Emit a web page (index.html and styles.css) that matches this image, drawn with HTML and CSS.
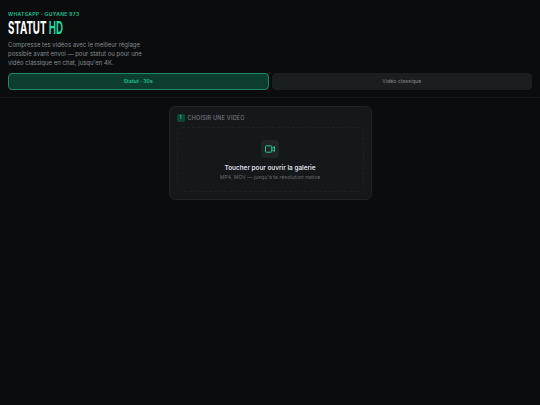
FILE: index.html
```html
<!DOCTYPE html>
<html lang="fr">
<head>
  <meta charset="UTF-8" />
  <meta name="viewport" content="width=device-width, initial-scale=1.0"/>
  <title>Statut HD</title>
  <link rel="stylesheet" href="styles.css">
</head>
<body>
  <header class="header">
    <div class="eyebrow">WHATSAPP · GUYANE 973</div>
    <h1 class="title">STATUT <span class="accent">HD</span></h1>
    <p class="intro">Compresse tes vidéos avec le meilleur réglage possible avant envoi — pour statut ou pour une vidéo classique en chat, jusqu'en 4K.</p>
    <div class="tabs">
      <button class="tab active">Statut · 30s</button>
      <button class="tab">Vidéo classique</button>
    </div>
  </header>

  <main class="main">
    <section class="card">
      <div class="step">
        <span class="step-num">1</span>
        <span class="step-label">CHOISIR UNE VIDÉO</span>
      </div>
      <div class="dropzone">
        <div class="drop-icon">
          <svg width="10" height="8" viewBox="0 0 10 8" fill="none" stroke="#25c596" stroke-width="1">
            <rect x="0.5" y="0.8" width="6.2" height="6.4" rx="0.8"/>
            <path d="M6.8 3.4 9.5 1.6v4.8L6.8 4.6"/>
          </svg>
        </div>
        <div class="drop-title">Toucher pour ouvrir la galerie</div>
        <div class="drop-sub">MP4, MOV — jusqu'à ta résolution native</div>
      </div>
    </section>
  </main>
</body>
</html>
```

FILE: styles.css
```css
* { box-sizing: border-box; }
html, body { height: 100%; }
body {
  margin: 0;
  background: #0a0c0e;
  color: #e8eaec;
  font-family: Inter, 'Liberation Sans', sans-serif;
}
.header {
  padding: 11px 8px 7px;
  border-bottom: 1px solid #15181b;
  height: 98px;
}
.eyebrow {
  font-size: 5px;
  line-height: 7px;
  font-weight: 600;
  letter-spacing: 0.35px;
  color: #25c596;
}
.title {
  margin: 1px 0 0;
  font-size: 18px;
  line-height: 18px;
  font-weight: 700;
  color: #fff;
  white-space: nowrap;
  transform: scaleX(0.54);
  transform-origin: left center;
}
.accent { color: #25d6a2; }
.intro {
  margin: 3px 0 0;
  width: 140px;
  font-size: 6px;
  line-height: 9.2px;
  color: #878c91;
}
.tabs {
  display: grid;
  grid-template-columns: 1fr 1fr;
  gap: 3px;
  margin-top: 5px;
}
.tab {
  height: 17px;
  padding: 0;
  background: #1b1e21;
  border: 1px solid #1b1e21;
  border-radius: 4px;
  color: #8b8f94;
  font-family: inherit;
  font-size: 5px;
  letter-spacing: 0.1px;
}
.tab.active {
  background: #0c3d30;
  border-color: #1f8a6b;
  color: #25c596;
  font-weight: 600;
}
.main {
  display: flex;
  justify-content: center;
  padding-top: 8px;
}
.card {
  width: 203px;
  height: 94px;
  padding: 7px 7px 8px;
  background: #15181b;
  border: 1px solid #1f2326;
  border-radius: 6px;
}
.step {
  display: flex;
  align-items: center;
  gap: 3px;
  height: 8px;
}
.step-num {
  width: 8px;
  height: 8px;
  background: #0c4636;
  border-radius: 2px;
  color: #25c596;
  font-size: 4.5px;
  line-height: 8px;
  font-weight: 700;
  text-align: center;
}
.step-label {
  font-size: 5.5px;
  letter-spacing: 0.2px;
  color: #73787c;
  font-weight: 500;
}
.dropzone {
  display: flex;
  flex-direction: column;
  align-items: center;
  height: 65px;
  margin-top: 5px;
  padding-top: 12px;
  border: 1px dashed #1d2124;
  border-radius: 5px;
}
.drop-icon {
  display: flex;
  align-items: center;
  justify-content: center;
  width: 18px;
  height: 18px;
  background: #202427;
  border-radius: 4px;
}
.drop-title {
  margin-top: 6px;
  font-size: 6.4px;
  line-height: 9px;
  font-weight: 600;
  color: #dcdfe1;
}
.drop-sub {
  font-size: 5px;
  line-height: 8px;
  color: #686d71;
  letter-spacing: 0.1px;
}
```
